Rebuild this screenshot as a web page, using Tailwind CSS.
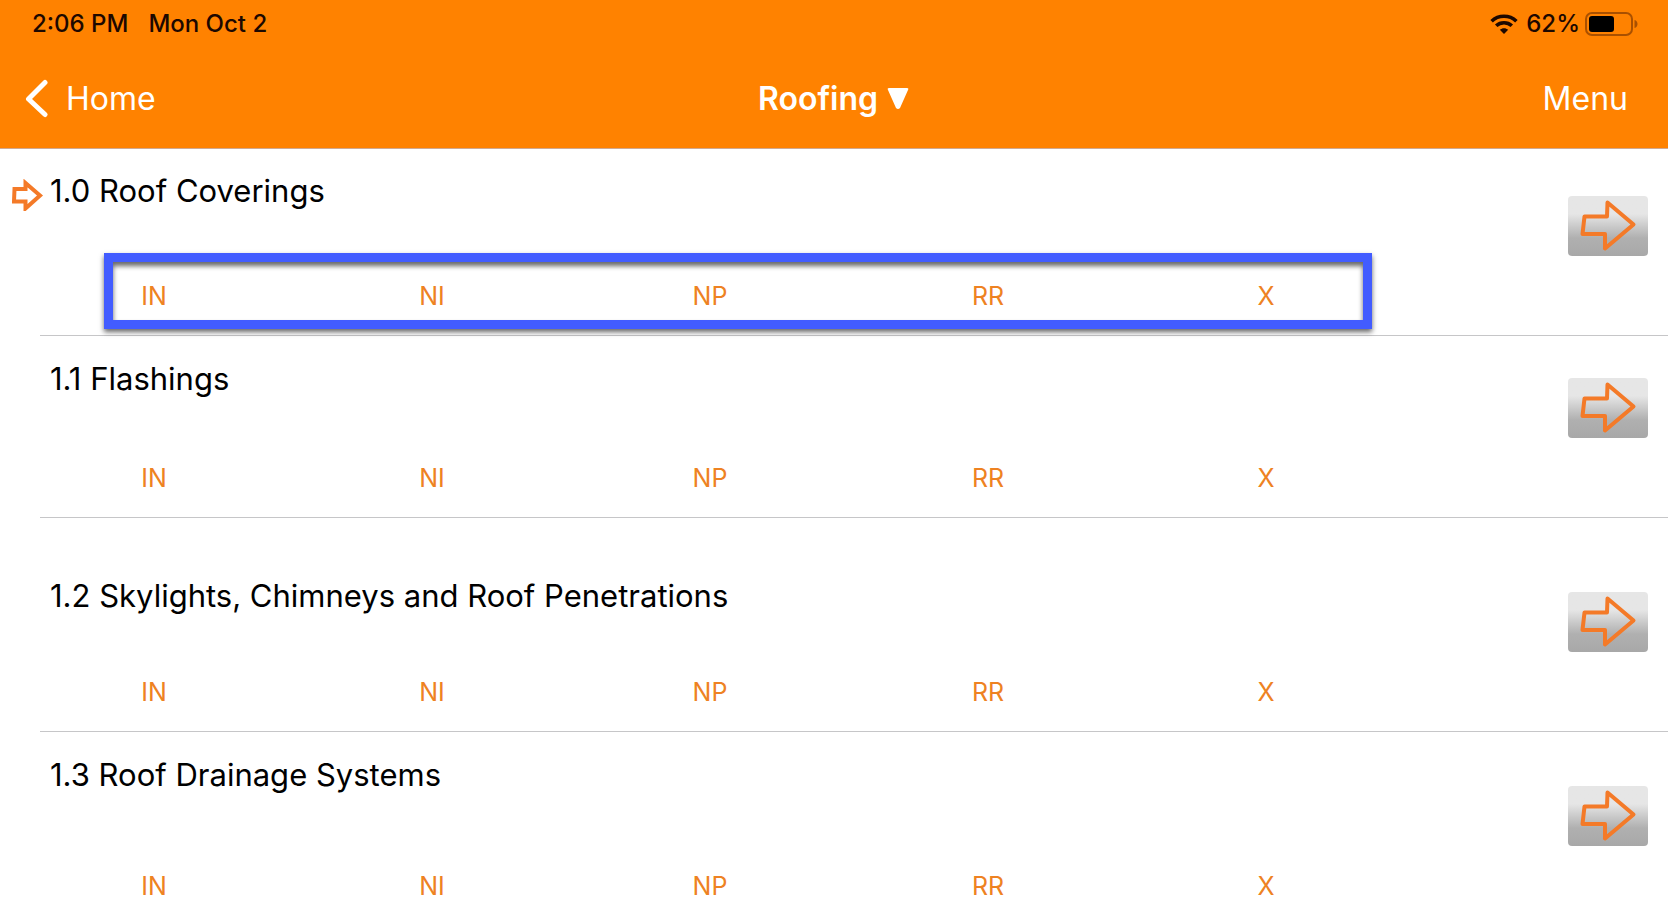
<!DOCTYPE html>
<html lang="en">
<head>
<meta charset="utf-8">
<meta name="viewport" content="width=device-width, initial-scale=1">
<title>Roofing</title>
<script src="https://cdn.jsdelivr.net/npm/@tailwindcss/browser@4"></script>
</head>
<body class="bg-white font-[Inter,sans-serif] text-black">
<svg class="hidden" aria-hidden="true">
  <symbol id="arrow" viewBox="0 0 80 60">
    <path d="M16.500 20.500H39L39.500 6.500L65.500 28.500L37 52.500V38H14.500Z" fill="none" stroke="#f47a28" stroke-width="4" stroke-linejoin="round"/>
  </symbol>
</svg>

<header class="border-b border-[#d0a890] bg-[#ff8200]">
  <div class="flex h-12 items-center justify-between pr-[30px] pl-8 text-2xl font-medium text-[#1c0800]">
    <div class="flex gap-5"><span>2:06 PM</span><span>Mon Oct 2</span></div>
    <div class="flex items-center gap-2">
      <svg class="h-5 w-7" viewBox="0 0 28 20" fill="none" stroke="currentColor" stroke-width="3.600" aria-hidden="true">
        <path d="M1.600 7.200C8.500 0.600 19.500 0.600 26.400 7.200"/>
        <path d="M6.200 11.800C10.500 7.800 17.500 7.800 21.800 11.800"/>
        <path d="M14 20L9.800 15.800C12.200 13.600 15.800 13.600 18.200 15.800Z" fill="currentColor" stroke="none"/>
      </svg>
      <div class="flex items-center gap-1">
        <span>62%</span>
        <svg class="h-6 w-[54px]" viewBox="0 0 54 24" aria-hidden="true">
          <rect x="2" y="1" width="46" height="22" rx="6" fill="none" stroke="#a95000" stroke-width="2"/>
          <rect x="5" y="4" width="25" height="16" rx="3" fill="#000"/>
          <path d="M50.500 8C54.500 9 54.500 15 50.500 16Z" fill="#a95000"/>
        </svg>
      </div>
    </div>
  </div>
  <nav class="grid h-[100px] grid-cols-3 items-center pt-px pr-10 pl-6 text-[32px] text-white">
    <a href="#home" class="flex items-center gap-4 justify-self-start">
      <svg class="h-10 w-[26px]" viewBox="0 0 26 40" fill="none" stroke="currentColor" stroke-width="5" stroke-linecap="round" stroke-linejoin="round" aria-hidden="true"><path d="M21 3.500L4.500 20L21 35.500"/></svg>
      <span>Home</span>
    </a>
    <button type="button" class="flex items-center gap-2 justify-self-center pl-4 font-semibold">
      <span>Roofing</span>
      <svg class="h-6 w-6" viewBox="0 0 24 24" aria-hidden="true"><path d="M3 1H21Q23 1 22 3L14 21Q12 23 10 21L2 3Q1 1 3 1Z" fill="currentColor"/></svg>
    </button>
    <a href="#menu" class="justify-self-end">Menu</a>
  </nav>
</header>

<main>
  <section class="relative">
    <div class="flex justify-between">
      <div class="w-5/6">
        <div class="flex items-center pt-[22px] pl-3">
          <svg class="mt-2 h-8 w-[38px]" viewBox="0 0 38 32" aria-hidden="true"><path d="M2.500 10H13.500V4L28 16.500L13.500 29.500V22.500H2Z" fill="none" stroke="#f47a28" stroke-width="4"/></svg>
          <h2 class="text-[31px] leading-10">1.0 Roof Coverings</h2>
        </div>
        <div class="mt-[65px] -mr-[15px] mb-5 ml-[15px] grid grid-cols-5 text-[25px] leading-10 text-[#ee8222]">
          <button type="button">IN</button><button type="button">NI</button><button type="button">NP</button><button type="button">RR</button><button type="button">X</button>
        </div>
      </div>
      <div class="flex items-end pr-5 pb-20">
        <button type="button" aria-label="Open Roof Coverings" class="rounded-sm bg-linear-to-b from-[#e6e6e6] from-30% via-[#b0b0b0] via-70% to-[#a8a8a8]"><svg class="h-[60px] w-20"><use href="#arrow"/></svg></button>
      </div>
    </div>
    <hr class="-mt-px ml-10 border-[#c6c6c8]">
    <div class="pointer-events-none absolute top-[104px] right-[296px] bottom-[7px] left-[104px] border-[9px] border-[#425cff] shadow-[0_3px_5px_rgba(0,0,0,0.6),inset_0_4px_5px_rgba(0,0,0,0.6)]"></div>
  </section>

  <section>
    <div class="flex justify-between">
      <div class="w-5/6">
        <h2 class="pt-[23px] pl-[50px] text-[31px] leading-10">1.1 Flashings</h2>
        <div class="mt-[59px] -mr-[15px] mb-5 ml-[15px] grid grid-cols-5 text-[25px] leading-10 text-[#ee8222]">
          <button type="button">IN</button><button type="button">NI</button><button type="button">NP</button><button type="button">RR</button><button type="button">X</button>
        </div>
      </div>
      <div class="flex items-end pr-5 pb-20">
        <button type="button" aria-label="Open Flashings" class="rounded-sm bg-linear-to-b from-[#e6e6e6] from-30% via-[#b0b0b0] via-70% to-[#a8a8a8]"><svg class="h-[60px] w-20"><use href="#arrow"/></svg></button>
      </div>
    </div>
    <hr class="-mt-px ml-10 border-[#c6c6c8]">
  </section>

  <section>
    <div class="flex justify-between">
      <div class="w-5/6">
        <h2 class="pt-[58px] pl-[50px] text-[31px] leading-10">1.2 Skylights, Chimneys and Roof Penetrations</h2>
        <div class="mt-14 -mr-[15px] mb-5 ml-[15px] grid grid-cols-5 text-[25px] leading-10 text-[#ee8222]">
          <button type="button">IN</button><button type="button">NI</button><button type="button">NP</button><button type="button">RR</button><button type="button">X</button>
        </div>
      </div>
      <div class="flex items-end pr-5 pb-20">
        <button type="button" aria-label="Open Skylights, Chimneys and Roof Penetrations" class="rounded-sm bg-linear-to-b from-[#e6e6e6] from-30% via-[#b0b0b0] via-70% to-[#a8a8a8]"><svg class="h-[60px] w-20"><use href="#arrow"/></svg></button>
      </div>
    </div>
    <hr class="-mt-px ml-10 border-[#c6c6c8]">
  </section>

  <section>
    <div class="flex justify-between">
      <div class="w-5/6">
        <h2 class="pt-[23px] pl-[50px] text-[31px] leading-10">1.3 Roof Drainage Systems</h2>
        <div class="mt-[71px] -mr-[15px] ml-[15px] grid grid-cols-5 text-[25px] leading-10 text-[#ee8222]">
          <button type="button">IN</button><button type="button">NI</button><button type="button">NP</button><button type="button">RR</button><button type="button">X</button>
        </div>
      </div>
      <div class="flex items-end pr-5 pb-[60px]">
        <button type="button" aria-label="Open Roof Drainage Systems" class="rounded-sm bg-linear-to-b from-[#e6e6e6] from-30% via-[#b0b0b0] via-70% to-[#a8a8a8]"><svg class="h-[60px] w-20"><use href="#arrow"/></svg></button>
      </div>
    </div>
  </section>
</main>
</body>
</html>
